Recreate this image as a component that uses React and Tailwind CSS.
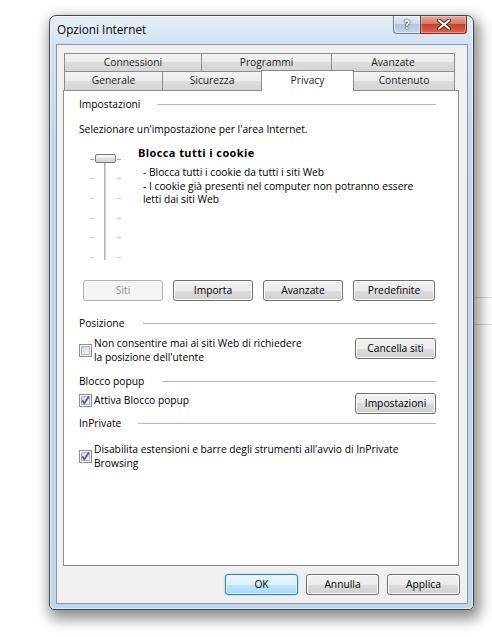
import React from 'react';

const btnBase =
  'h-[21px] rounded-[3px] border text-[10.25px] leading-none flex items-center justify-center';
const btnGray =
  'text-black border-[#707070] bg-[linear-gradient(to_bottom,#f2f2f2_0%,#ebebeb_50%,#dddddd_50%,#cfcfcf_100%)] shadow-[inset_0_0_0_1px_#fcfcfc]';

function Button({ children, className = '', disabled, primary }) {
  let look = btnGray;
  if (disabled) look = 'border-[#adb2b5] bg-[#f4f4f4] text-[#8d8d8d]';
  if (primary)
    look =
      'text-black border-[#3c7fb1] bg-[linear-gradient(to_bottom,#eaf6fd_0%,#d9f0fc_50%,#bee6fd_50%,#a7d9f5_100%)] shadow-[inset_0_0_0_1px_#dff3fd,0_0_2px_#6ec5f2]';
  return <div className={`${btnBase} ${look} ${className}`}>{children}</div>;
}

function CheckBox({ checked }) {
  return (
    <svg width="13" height="13" viewBox="0 0 13 13" className="shrink-0">
      <defs>
        <linearGradient id="cbfill" x1="0" y1="0" x2="1" y2="1">
          <stop offset="0" stopColor="#cdd1d6" />
          <stop offset="1" stopColor="#f7f7f7" />
        </linearGradient>
      </defs>
      <rect x="0.5" y="0.5" width="12" height="12" fill="#f4f4f4" stroke="#8e8f8f" />
      <rect x="2.5" y="2.5" width="8" height="8" fill="url(#cbfill)" stroke="#b4b8be" />
      {checked && (
        <path d="M3.2 6.4 5.4 9.3 9.9 2.6" fill="none" stroke="#4a5f9c" strokeWidth="1.8" />
      )}
    </svg>
  );
}

function GroupHeader({ label, labelWidth }) {
  return (
    <div className="flex items-center h-[15px]">
      <span className={`${labelWidth} shrink-0 whitespace-nowrap`}>{label}</span>
      <div className="flex-1 h-px bg-[#b9b9b9]" />
    </div>
  );
}

function Slider() {
  const ticks = [14, 33, 53, 73, 92, 112];
  return (
    <svg width="46" height="118" viewBox="0 0 46 118" className="shrink-0">
      <defs>
        <linearGradient id="thumb" x1="0" y1="0" x2="0" y2="1">
          <stop offset="0" stopColor="#f7f7f7" />
          <stop offset="0.5" stopColor="#ececec" />
          <stop offset="0.5" stopColor="#dedede" />
          <stop offset="1" stopColor="#d3d3d3" />
        </linearGradient>
      </defs>
      <rect x="25" y="17" width="2" height="98" fill="#cfcfcf" />
      <rect x="25" y="17" width="1" height="98" fill="#b3b3b3" />
      {ticks.map((y, i) => (
        <g key={y} stroke={i === 0 ? '#a6a6a6' : '#cdcdcd'}>
          <line x1="11" x2="15" y1={y + 0.5} y2={y + 0.5} />
          <line x1="38" x2="42" y1={y + 0.5} y2={y + 0.5} />
        </g>
      ))}
      <rect x="16.5" y="9.5" width="20" height="8" rx="1.5" fill="url(#thumb)" stroke="#7a7a7a" />
    </svg>
  );
}

const tabBase =
  'h-full flex items-center justify-center border border-b-0 border-[#898c95] bg-[linear-gradient(to_bottom,#f3f3f3_0%,#ebebeb_50%,#dddddd_50%,#d5d5d5_100%)] text-[10.25px] text-[#1e1e1e]';

export default function App() {
  return (
    <div className="relative w-[492px] h-[637px] overflow-hidden bg-white font-['Open_Sans',sans-serif] text-black">
      {/* background lines behind the dialog */}
      <div className="absolute left-[474px] top-[297px] w-[18px] h-px bg-[#d9d9d9]" />
      <div className="absolute left-[474px] top-[324px] w-[18px] h-px bg-[#d9d9d9]" />

      {/* Window */}
      <div className="relative ml-[49px] mt-[15px] w-[425px] h-[595px] rounded-t-[7px] rounded-b-[5px] border border-[#3f4650] bg-[linear-gradient(to_bottom,#e4eef8_0px,#d3e2f2_28px,#c3d8ee_120px,#bfd5ec_100%)] shadow-[inset_0_0_0_1px_rgba(255,255,255,0.55),3px_6px_14px_3px_rgba(0,0,0,0.45)]">
        {/* Title bar */}
        <div className="flex h-[28px]">
          <div className="self-center pl-[7px] text-[11.75px] leading-none [text-shadow:0_0_8px_#ffffff]">
            Opzioni Internet
          </div>
          <div className="ml-auto mr-[6px] flex self-start">
            <div className="w-[28px] h-[18px] rounded-bl-[4px] border border-t-0 border-[#6c7b8d] bg-[linear-gradient(to_bottom,#e5edf5_0%,#cbd8e6_50%,#b3c5d9_50%,#c5d5e6_100%)] shadow-[inset_0_0_0_1px_rgba(255,255,255,0.5)] flex items-center justify-center text-[12px] font-bold text-white [text-shadow:0_0_1px_#33475e,0_0_1px_#33475e,0_0_2px_#33475e]">
              ?
            </div>
            <div className="-ml-px w-[47px] h-[18px] rounded-br-[4px] border border-t-0 border-[#7a2d22] bg-[linear-gradient(to_bottom,#e9a99b_0%,#d8735f_50%,#c7452f_50%,#d9644c_100%)] shadow-[inset_0_0_0_1px_rgba(255,255,255,0.35)] flex items-center justify-center">
              <svg width="14" height="11" viewBox="0 0 14 11">
                <path d="M2 1.5 12 9.5 M12 1.5 2 9.5" stroke="#5a1e16" strokeWidth="4" strokeLinecap="round" />
                <path d="M2 1.5 12 9.5 M12 1.5 2 9.5" stroke="#ffffff" strokeWidth="2.2" strokeLinecap="round" />
              </svg>
            </div>
          </div>
        </div>

        {/* Client area */}
        <div className="ml-[6px] w-[412px] h-[560px] border border-[#8399b0] bg-[#f0f0f0]">
          {/* Tabs */}
          <div className="pl-[7px] pt-[8px]">
            <div className="flex h-[18px]">
              <div className={`${tabBase} w-[138px]`}>Connessioni</div>
              <div className={`${tabBase} w-[131px] -ml-px`}>Programmi</div>
              <div className={`${tabBase} w-[124px] -ml-px`}>Avanzate</div>
            </div>
            <div className="flex h-[19px] items-start">
              <div className={`${tabBase} w-[99px]`}>Generale</div>
              <div className={`${tabBase} w-[100px] -ml-px`}>Sicurezza</div>
              <div className="relative z-10 -ml-px -mt-px w-[93px] h-[21px] border border-b-0 border-[#898c95] bg-white flex items-center justify-center text-[10.25px] text-[#1e1e1e]">
                Privacy
              </div>
              <div className={`${tabBase} w-[102px] -ml-px`}>Contenuto</div>
            </div>
          </div>

          {/* Panel */}
          <div className="ml-[6px] w-[396px] h-[476px] border border-[#898c95] bg-white pl-[15px] pr-[22px] text-[10.25px] leading-[15px]">
            <div className="mt-[6px]">
              <GroupHeader label="Impostazioni" labelWidth="w-[78px]" />
            </div>
            <div className="mt-[10px] h-[15px]">Selezionare un'impostazione per l'area Internet.</div>

            <div className="mt-[8px] flex">
              <Slider />
              <div className="ml-[13px]">
                <div className="font-bold text-[11px] tracking-[0.4px]">Blocca tutti i cookie</div>
                <div className="mt-[6px] pl-[5px] leading-[13.5px]">
                  <div>- Blocca tutti i cookie da tutti i siti Web</div>
                  <div>- I cookie già presenti nel computer non potranno essere</div>
                  <div>letti dai siti Web</div>
                </div>
              </div>
            </div>

            <div className="mt-[17px] ml-[4px] flex gap-[10px]">
              <Button disabled className="w-[80px]">Siti</Button>
              <Button className="w-[80px]">Importa</Button>
              <Button className="w-[80px]">Avanzate</Button>
              <Button className="w-[82px]">Predefinite</Button>
            </div>

            <div className="mt-[15px]">
              <GroupHeader label="Posizione" labelWidth="w-[64px]" />
            </div>
            <div className="mt-[5px] flex justify-between">
              <div className="flex items-center gap-[2px]">
                <CheckBox />
                <div className="leading-[14px]">
                  <div>Non consentire mai ai siti Web di richiedere</div>
                  <div>la posizione dell'utente</div>
                </div>
              </div>
              <Button className="mt-[2px] w-[81px]">Cancella siti</Button>
            </div>

            <div className="mt-[10px]">
              <GroupHeader label="Blocco popup" labelWidth="w-[83px]" />
            </div>
            <div className="mt-[4px] flex items-start justify-between">
              <div className="flex items-center gap-[2px] h-[15px]">
                <CheckBox checked />
                <div>Attiva Blocco popup</div>
              </div>
              <Button className="w-[81px]">Impostazioni</Button>
            </div>

            <div className="mt-[2px]">
              <GroupHeader label="InPrivate" labelWidth="w-[59px]" />
            </div>
            <div className="mt-[12px] flex items-center gap-[2px]">
              <CheckBox checked />
              <div className="leading-[13.5px]">
                <div>Disabilita estensioni e barre degli strumenti all'avvio di InPrivate</div>
                <div>Browsing</div>
              </div>
            </div>
          </div>

          {/* Dialog buttons */}
          <div className="mt-[8px] pr-[7px] flex justify-end gap-[8px]">
            <Button primary className="w-[73px]">OK</Button>
            <Button className="w-[73px]">Annulla</Button>
            <Button className="w-[73px]">Applica</Button>
          </div>
        </div>
      </div>
    </div>
  );
}
